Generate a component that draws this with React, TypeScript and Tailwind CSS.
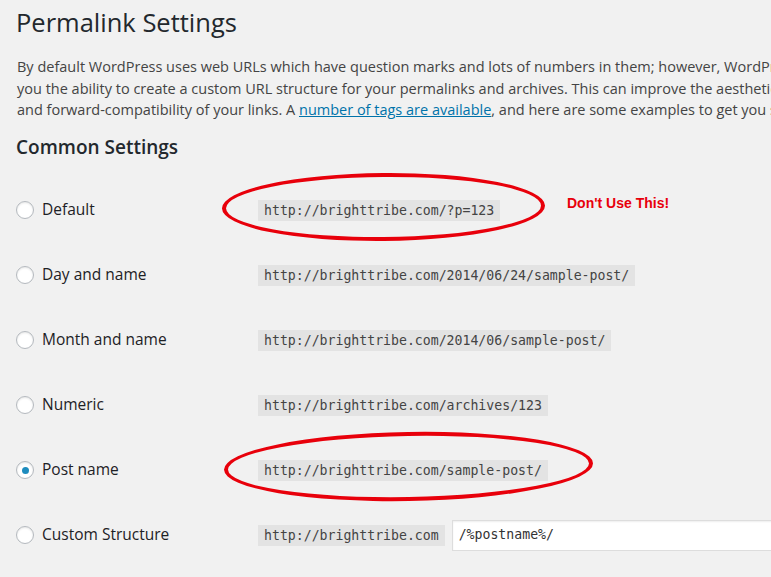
const rows = [
  { label: 'Default', url: 'http://brighttribe.com/?p=123' },
  { label: 'Day and name', url: 'http://brighttribe.com/2014/06/24/sample-post/' },
  { label: 'Month and name', url: 'http://brighttribe.com/2014/06/sample-post/' },
  { label: 'Numeric', url: 'http://brighttribe.com/archives/123' },
  { label: 'Post name', url: 'http://brighttribe.com/sample-post/', checked: true },
];

function Radio({ checked }: { checked?: boolean }) {
  return (
    <span className="flex h-[18px] w-[18px] shrink-0 items-center justify-center rounded-full border border-[#b4b9be] bg-white shadow-[inset_0_1px_2px_rgba(0,0,0,0.1)]">
      {checked && <span className="h-[7px] w-[7px] rounded-full bg-[#1e8cbe]" />}
    </span>
  );
}

function Code({ children }: { children: string }) {
  return (
    <code className="bg-[#e3e3e3] px-[6px] leading-[21px] text-[13.2px] text-[#444] [font-family:'DejaVu_Sans_Mono',monospace] whitespace-nowrap">
      {children}
    </code>
  );
}

export default function App() {
  return (
    <div className="relative h-[577px] w-[771px] overflow-hidden bg-[#f1f1f1] [font-family:'Open_Sans',sans-serif]">
      <div className="w-[1000px] pl-[16px]">
        <h1 className="pt-[5px] text-[25.5px] leading-[34px] text-[#23282d]">Permalink Settings</h1>

        <p className="mt-[17px] text-[14.5px] leading-[21.5px] text-[#444] whitespace-nowrap pl-[1px]">
          By default WordPress uses web URLs which have question marks and lots of numbers in them; however, WordPress offers
          <br />
          you the ability to create a custom URL structure for your permalinks and archives. This can improve the aesthetics, usability,
          <br />
          and forward-compatibility of your links. A{' '}
          <a className="text-[#0073aa] underline">number of tags are available</a>, and here are some examples to get you started.
        </p>

        <h2 className="mt-[13px] text-[19px] font-semibold leading-[26px] text-[#23282d]">Common Settings</h2>

        <div className="mt-[18px] flex flex-col">
          {rows.map((r) => (
            <div key={r.label} className="flex h-[65px] items-center">
              <div className="flex w-[242px] items-center gap-[8px]">
                <Radio checked={r.checked} />
                <span className="text-[15.5px] text-[#1d2125]">{r.label}</span>
              </div>
              <Code>{r.url}</Code>
            </div>
          ))}
          <div className="flex h-[65px] items-center">
            <div className="flex w-[242px] items-center gap-[8px]">
              <Radio />
              <span className="text-[15.5px] text-[#1d2125]">Custom Structure</span>
            </div>
            <Code>http://brighttribe.com</Code>
            <div className="ml-[7px] flex h-[31px] w-[420px] items-center border border-[#ddd] bg-white px-[6px] text-[13.2px] text-[#333] shadow-[inset_0_1px_2px_rgba(0,0,0,0.07)] [font-family:'DejaVu_Sans_Mono',monospace]">
              /%postname%/
            </div>
          </div>
        </div>
      </div>

      {/* annotations */}
      <div className="absolute left-[222px] top-[173px] h-[68px] w-[323px] -rotate-[0.5deg] rounded-[50%] border-[4px] border-[#e8000b]" />
      <span className="absolute left-[567px] top-[193px] text-[14px] font-bold text-[#e8000b] [font-family:'Liberation_Sans',Arial,sans-serif]">
        Don't Use This!
      </span>
      <div className="absolute left-[224px] top-[432px] h-[69px] w-[369px] -rotate-[1deg] rounded-[50%] border-[4px] border-[#e8000b]" />
    </div>
  );
}
